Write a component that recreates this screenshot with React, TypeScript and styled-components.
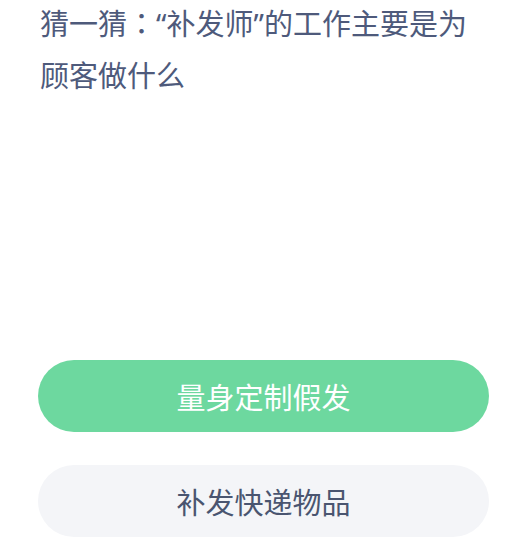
import styled, { createGlobalStyle } from "styled-components";

const GlobalStyle = createGlobalStyle`
  html, body {
    margin: 0;
    padding: 0;
    background: #ffffff;
  }
  body {
    font-family: "Noto Sans CJK SC", "Noto Sans", sans-serif;
  }
`;

const Page = styled.div`
  height: 553px;
  box-sizing: border-box;
  padding: 0 31px 16px 38px;
  display: flex;
  flex-direction: column;
  justify-content: space-between;
`;

const Question = styled.h1`
  margin: -3px 0 0;
  padding-left: 2px;
  font-size: 29px;
  font-weight: 400;
  line-height: 50px;
  color: #4e5a7b;
`;

// narrow latin quotes, centred full-width colon like the reference
const Quote = styled.span`
  font-family: "Noto Sans", "Liberation Sans", sans-serif;
`;

const Colon = styled.span`
  font-family: "Noto Sans CJK TC", "Noto Sans CJK SC", sans-serif;
`;

const Options = styled.div`
  display: flex;
  flex-direction: column;
  gap: 33px;
`;

const Option = styled.button<{ $selected?: boolean }>`
  height: 72px;
  width: 100%;
  border: none;
  border-radius: 36px;
  font-family: inherit;
  font-size: 29px;
  font-weight: 400;
  color: ${(p) => (p.$selected ? "#ffffff" : "#4a5570")};
  background: ${(p) => (p.$selected ? "#6dd89f" : "#f4f5f8")};
  display: flex;
  align-items: center;
  justify-content: center;
  cursor: pointer;
`;

export default function App() {
  return (
    <>
      <GlobalStyle />
      <Page>
        <Question>
          猜一猜<Colon>：</Colon>
          <Quote>“</Quote>补发师<Quote>”</Quote>的工作主要是为顾客做什么
        </Question>
        <Options>
          <Option $selected>量身定制假发</Option>
          <Option>补发快递物品</Option>
        </Options>
      </Page>
    </>
  );
}
